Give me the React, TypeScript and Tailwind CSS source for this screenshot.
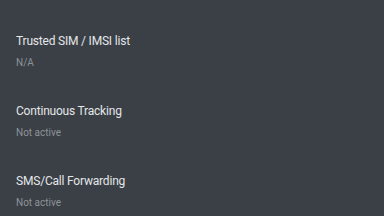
import React from "react";

const items = [
  { title: "Trusted SIM / IMSI list", sub: "N/A" },
  { title: "Continuous Tracking", sub: "Not active" },
  { title: "SMS/Call Forwarding", sub: "Not active" },
];

export default function App() {
  return (
    <div className="w-[384px] h-[216px] bg-[#3a4046] overflow-hidden flex flex-col pt-[33px] gap-[34px] px-4" style={{ fontFamily: "Roboto, 'Noto Sans', sans-serif" }}>
      {items.map((it) => (
        <div key={it.title} className="flex flex-col gap-[8px]">
          <div className="text-[12px] leading-[16px] tracking-[-0.2px] text-[#e4e6e8]">{it.title}</div>
          <div className="text-[10px] leading-[12px] text-[#8e9398]">{it.sub}</div>
        </div>
      ))}
    </div>
  );
}
